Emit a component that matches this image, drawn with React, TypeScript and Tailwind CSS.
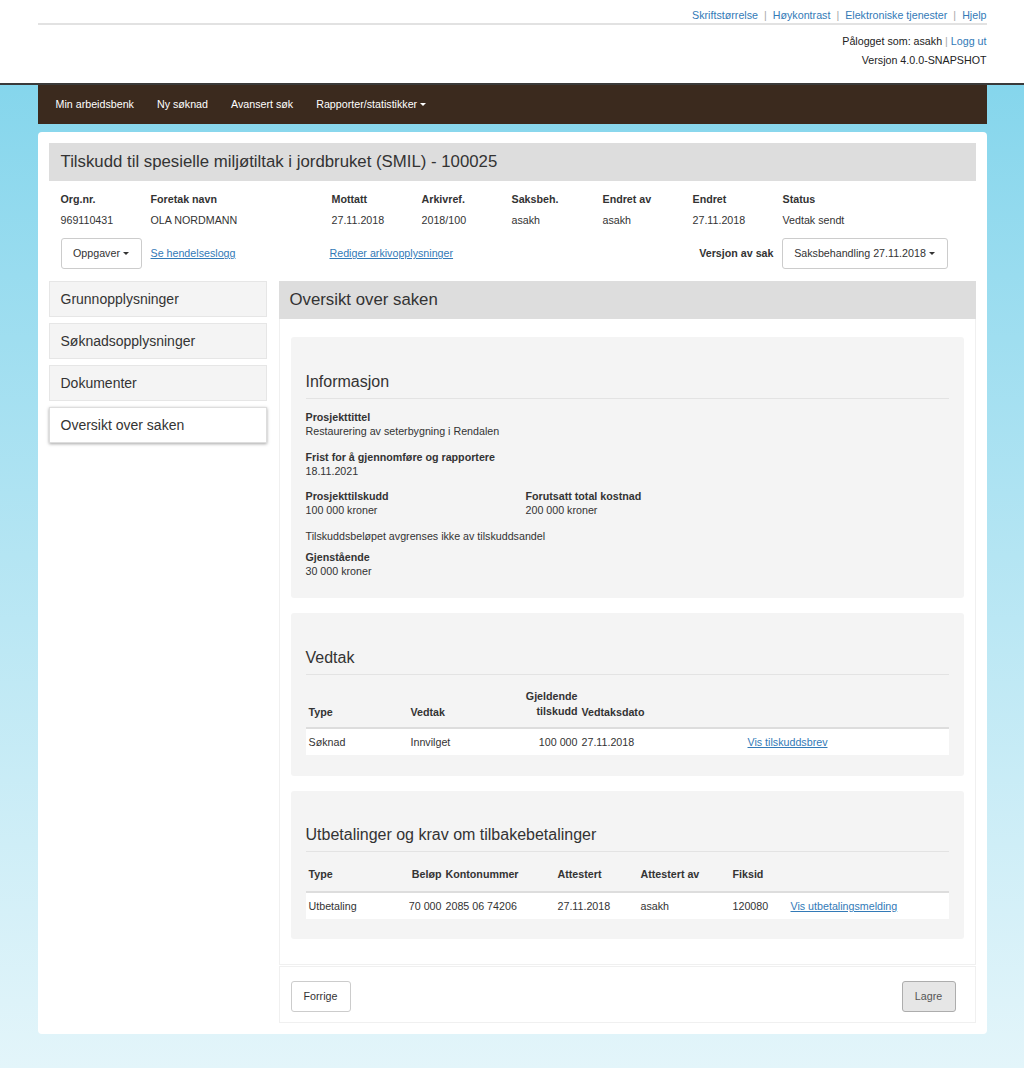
import React from 'react';

const Caret = () => (
  <span className="inline-block w-0 h-0 ml-[3px] align-middle border-x-[3px] border-t-[3px] border-x-transparent border-t-current" />
);

const Field = ({ label, value, className = '' }: { label: string; value: string; className?: string }) => (
  <div className={className}>
    <div className="font-bold leading-[14px]">{label}</div>
    <div className="leading-[14px]">{value}</div>
  </div>
);

const Card = ({ title, children, className = '' }: { title: string; children: React.ReactNode; className?: string }) => (
  <div className={`bg-[#f4f4f4] rounded-[3px] px-[15px] ${className}`}>
    <h3 className="text-[16px] leading-[18px] text-[#333]">{title}</h3>
    <div className="mt-[7px] border-t border-[#e3e3e3]" />
    {children}
  </div>
);

const link = 'text-[#337ab7] underline';

export default function App() {
  const meta = [
    ['Org.nr.', '969110431'],
    ['Foretak navn', 'OLA NORDMANN'],
    ['Mottatt', '27.11.2018'],
    ['Arkivref.', '2018/100'],
    ['Saksbeh.', 'asakh'],
    ['Endret av', 'asakh'],
    ['Endret', '27.11.2018'],
    ['Status', 'Vedtak sendt'],
  ];
  const side = ['Grunnopplysninger', 'Søknadsopplysninger', 'Dokumenter', 'Oversikt over saken'];

  return (
    <div className="min-h-[1068px] text-[10.7px] text-[#333] font-['Liberation_Sans',Arial,sans-serif] bg-gradient-to-b from-[#7cd3eb] to-[#e3f5fa]">
      {/* Header */}
      <header className="bg-white border-b-2 border-[#3a3a3a]">
        <div className="w-[949px] mx-auto pt-[8px] pb-[16px]">
          <div className="flex justify-end items-center leading-[14px] pb-[1px]">
            <a className="text-[#337ab7]">Skriftstørrelse</a>
            <span className="mx-[6px] text-[#aaa]">|</span>
            <a className="text-[#337ab7]">Høykontrast</a>
            <span className="mx-[6px] text-[#aaa]">|</span>
            <a className="text-[#337ab7]">Elektroniske tjenester</a>
            <span className="mx-[6px] text-[#aaa]">|</span>
            <a className="text-[#337ab7]">Hjelp</a>
          </div>
          <div className="border-t-2 border-[#e2e2e2]" />
          <div className="mt-[9px] text-right leading-[14px] text-[#222]">
            Pålogget som: asakh <span className="text-[#aaa]">|</span> <a className="text-[#337ab7]">Logg ut</a>
          </div>
          <div className="mt-[5px] text-right leading-[14px] text-[#222]">Versjon 4.0.0-SNAPSHOT</div>
        </div>
      </header>

      <div className="w-[949px] mx-auto pb-[33px]">
        {/* Nav */}
        <nav className="h-[39px] bg-[#3b2a1e] flex items-center pl-[18px] gap-[23px] text-white">
          <span>Min arbeidsbenk</span>
          <span>Ny søknad</span>
          <span>Avansert søk</span>
          <span className="flex items-center">Rapporter/statistikker<Caret /></span>
        </nav>

        {/* Main */}
        <main className="mt-[8px] bg-white rounded-[4px] p-[11px]">
          <div className="h-[38px] bg-[#dddddd] flex items-center px-[12px]">
            <h2 className="text-[16.8px] text-[#333]">Tilskudd til spesielle miljøtiltak i jordbruket (SMIL) - 100025</h2>
          </div>

          <div className="px-[12px] pt-[11px]">
            <div className="grid grid-cols-[90px_181px_90px_90px_91px_90px_90px_1fr]">
              {meta.map(([l, v]) => (
                <div key={l}>
                  <div className="font-bold leading-[15px]">{l}</div>
                  <div className="mt-[6px] leading-[15px]">{v}</div>
                </div>
              ))}
            </div>
            <div className="mt-[10px] flex items-center">
              <button className="h-[31px] w-[81px] border border-[#ccc] rounded-[3px] bg-white flex items-center justify-center text-[#333]">
                Oppgaver<Caret />
              </button>
              <a className={`${link} ml-[9px]`}>Se hendelseslogg</a>
              <a className={`${link} ml-[94px]`}>Rediger arkivopplysninger</a>
              <span className="ml-auto font-bold">Versjon av sak</span>
              <button className="ml-[8px] mr-[16px] h-[31px] w-[166px] border border-[#ccc] rounded-[3px] bg-white flex items-center justify-center text-[#333]">
                Saksbehandling 27.11.2018<Caret />
              </button>
            </div>
          </div>

          <div className="mt-[12px] flex gap-[12px]">
            {/* Sidebar */}
            <aside className="w-[218px] flex flex-col gap-[6px]">
              {side.map((s, i) => (
                <div
                  key={s}
                  className={`h-[36px] flex items-center px-[11px] text-[14px] text-[#333] border ${
                    i === 3 ? 'bg-white border-[#ddd] shadow-[0_1px_3px_rgba(0,0,0,0.35)]' : 'bg-[#f4f4f4] border-[#e6e6e6]'
                  }`}
                >
                  {s}
                </div>
              ))}
            </aside>

            {/* Content */}
            <section className="flex-1">
              <div className="h-[38px] bg-[#dddddd] flex items-center px-[11px] text-[16.8px] text-[#333]">Oversikt over saken</div>
              <div className="border-x border-b border-[#f0f0f0] px-[11px] pt-[18px] pb-[25px] flex flex-col">
                <Card title="Informasjon" className="pt-[36px] pb-[20px]">
                  <Field className="mt-[11px]" label="Prosjekttittel" value="Restaurering av seterbygning i Rendalen" />
                  <Field className="mt-[12px]" label="Frist for å gjennomføre og rapportere" value="18.11.2021" />
                  <div className="mt-[11px] flex">
                    <Field className="w-[220px]" label="Prosjekttilskudd" value="100 000 kroner" />
                    <Field label="Forutsatt total kostnad" value="200 000 kroner" />
                  </div>
                  <div className="mt-[12px] leading-[14px]">Tilskuddsbeløpet avgrenses ikke av tilskuddsandel</div>
                  <Field className="mt-[7px]" label="Gjenstående" value="30 000 kroner" />
                </Card>

                <Card title="Vedtak" className="mt-[15px] pt-[36px] pb-[21px]">
                  <table className="mt-[9px] w-full table-fixed border-collapse">
                    <colgroup>
                      <col className="w-[102px]" />
                      <col className="w-[113px]" />
                      <col className="w-[58px]" />
                      <col className="w-[166px]" />
                      <col />
                    </colgroup>
                    <thead>
                      <tr className="border-b-2 border-[#ddd] align-bottom font-bold text-left">
                        <th className="px-[3px] pt-[5px] pb-[8px] leading-[14px]">Type</th>
                        <th className="px-[3px] pt-[5px] pb-[8px] leading-[14px]">Vedtak</th>
                        <th className="px-[1px] pt-[5px] pb-[8px] leading-[15px] text-right">Gjeldende tilskudd</th>
                        <th className="px-[3px] pt-[5px] pb-[8px] leading-[14px]">Vedtaksdato</th>
                        <th />
                      </tr>
                    </thead>
                    <tbody>
                      <tr className="bg-white h-[27px]">
                        <td className="px-[3px]">Søknad</td>
                        <td className="px-[3px]">Innvilget</td>
                        <td className="px-[1px] text-right whitespace-nowrap">100 000</td>
                        <td className="px-[3px]">27.11.2018</td>
                        <td className="px-[3px]"><a className={link}>Vis tilskuddsbrev</a></td>
                      </tr>
                    </tbody>
                  </table>
                </Card>

                <Card title="Utbetalinger og krav om tilbakebetalinger" className="mt-[15px] pt-[35px] pb-[20px]">
                  <table className="mt-[10px] w-full table-fixed border-collapse">
                    <colgroup>
                      <col className="w-[100px]" />
                      <col className="w-[39px]" />
                      <col className="w-[110px]" />
                      <col className="w-[83px]" />
                      <col className="w-[92px]" />
                      <col className="w-[58px]" />
                      <col />
                    </colgroup>
                    <thead>
                      <tr className="border-b-2 border-[#ddd] align-bottom font-bold text-left">
                        <th className="px-[3px] pt-[5px] pb-[10px] leading-[14px]">Type</th>
                        <th className="px-[3px] pt-[5px] pb-[10px] leading-[14px] text-right">Beløp</th>
                        <th className="px-[1px] pt-[5px] pb-[10px] leading-[14px]">Kontonummer</th>
                        <th className="px-[3px] pt-[5px] pb-[10px] leading-[14px]">Attestert</th>
                        <th className="px-[3px] pt-[5px] pb-[10px] leading-[14px]">Attestert av</th>
                        <th className="px-[3px] pt-[5px] pb-[10px] leading-[14px]">Fiksid</th>
                        <th />
                      </tr>
                    </thead>
                    <tbody>
                      <tr className="bg-white h-[27px]">
                        <td className="px-[3px]">Utbetaling</td>
                        <td className="px-[3px] text-right whitespace-nowrap">70 000</td>
                        <td className="px-[1px] whitespace-nowrap">2085 06 74206</td>
                        <td className="px-[3px]">27.11.2018</td>
                        <td className="px-[3px]">asakh</td>
                        <td className="px-[3px]">120080</td>
                        <td className="px-[3px]"><a className={link}>Vis utbetalingsmelding</a></td>
                      </tr>
                    </tbody>
                  </table>
                </Card>
              </div>

              {/* Footer */}
              <div className="mt-[1px] border border-[#f0f0f0] h-[57px] flex items-start justify-between px-[11px] pt-[14px] pr-[19px]">
                <button className="h-[31px] w-[60px] border border-[#ccc] rounded-[3px] bg-white text-[#333]">Forrige</button>
                <button className="h-[31px] w-[54px] border border-[#adadad] rounded-[3px] bg-[#e6e6e6] text-[#555]">Lagre</button>
              </div>
            </section>
          </div>
        </main>
      </div>
    </div>
  );
}
